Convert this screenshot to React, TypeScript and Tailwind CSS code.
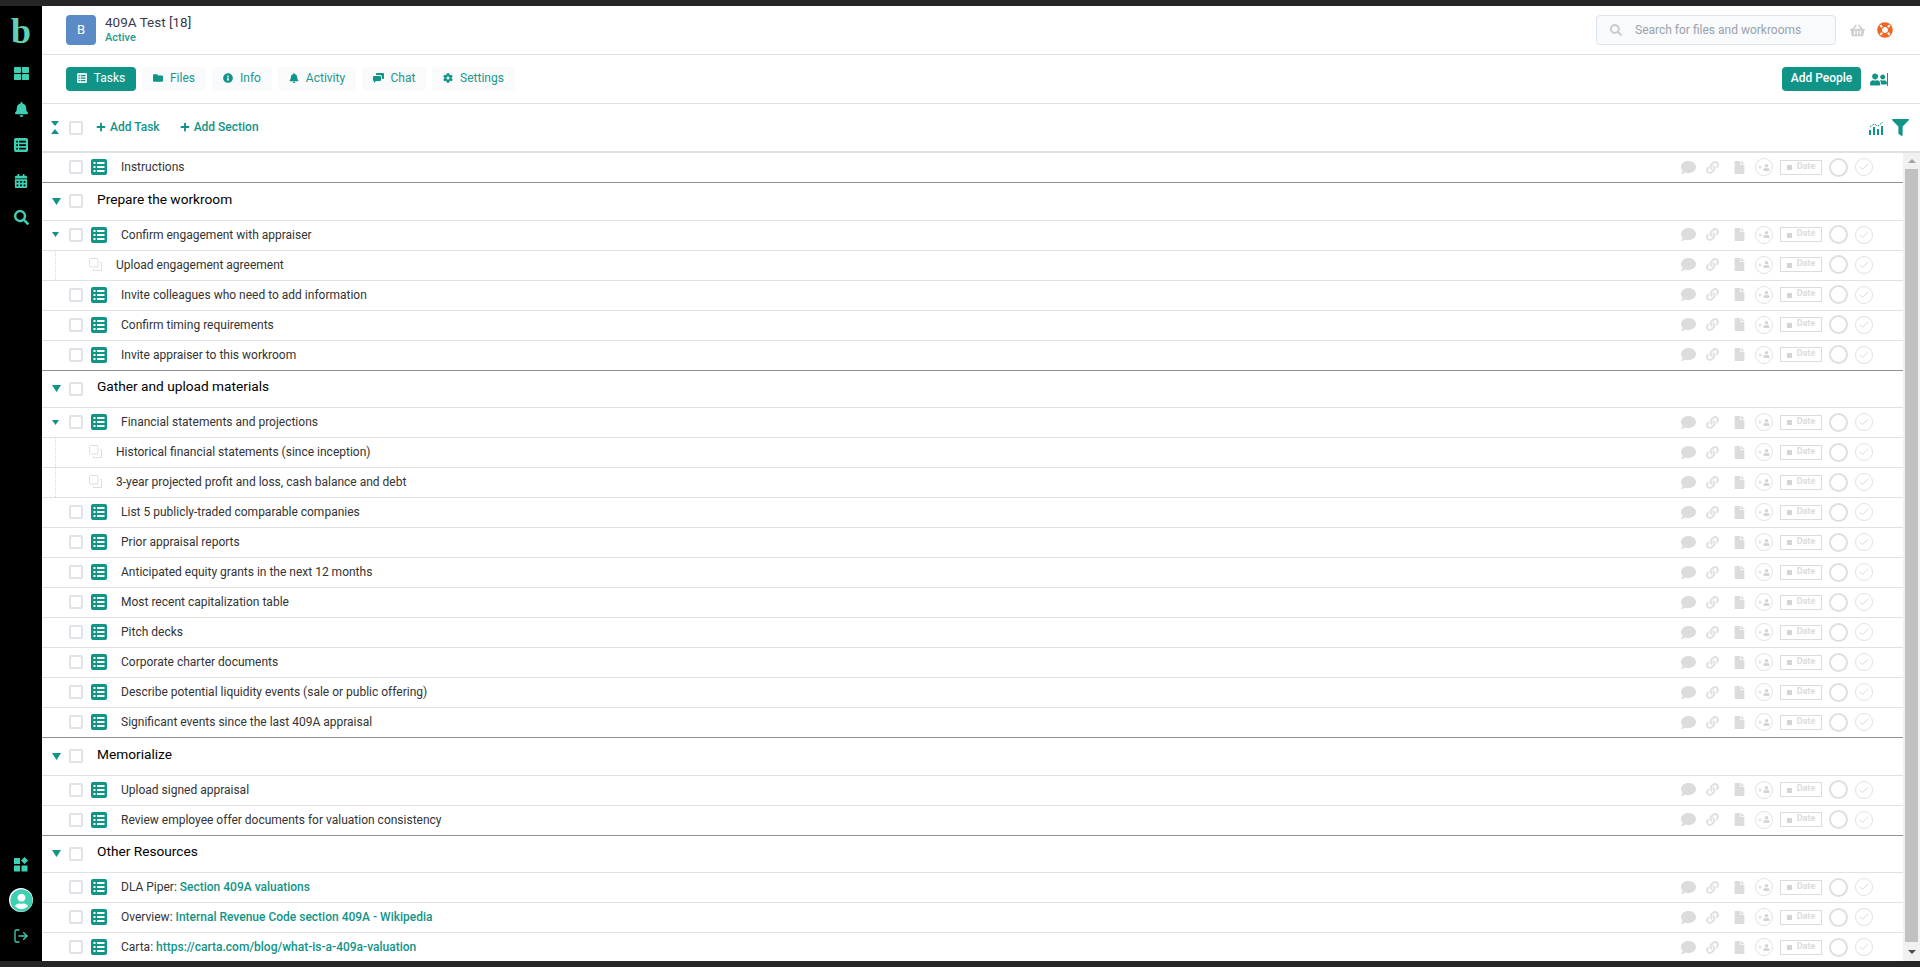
import type { ReactNode } from "react";
import { Check, LogOut } from "lucide-react";
import {
  FaBell,
  FaCalendarAlt,
  FaCog,
  FaComment,
  FaFile,
  FaFilter,
  FaFolder,
  FaInfoCircle,
  FaLifeRing,
  FaLink,
  FaPlus,
  FaSearch,
  FaShoppingBasket,
  FaThLarge,
  FaUser,
  FaUserCircle,
  FaUserFriends,
} from "react-icons/fa";

type Task = {
  label: string;
  link?: string;
  open?: boolean;
  sub?: boolean;
};

const sections: { title: string; tasks: Task[] }[] = [
  {
    title: "Prepare the workroom",
    tasks: [
      { label: "Confirm engagement with appraiser", open: true },
      { label: "Upload engagement agreement", sub: true },
      { label: "Invite colleagues who need to add information" },
      { label: "Confirm timing requirements" },
      { label: "Invite appraiser to this workroom" },
    ],
  },
  {
    title: "Gather and upload materials",
    tasks: [
      { label: "Financial statements and projections", open: true },
      { label: "Historical financial statements (since inception)", sub: true },
      { label: "3-year projected profit and loss, cash balance and debt", sub: true },
      { label: "List 5 publicly-traded comparable companies" },
      { label: "Prior appraisal reports" },
      { label: "Anticipated equity grants in the next 12 months" },
      { label: "Most recent capitalization table" },
      { label: "Pitch decks" },
      { label: "Corporate charter documents" },
      { label: "Describe potential liquidity events (sale or public offering)" },
      { label: "Significant events since the last 409A appraisal" },
    ],
  },
  {
    title: "Memorialize",
    tasks: [
      { label: "Upload signed appraisal" },
      { label: "Review employee offer documents for valuation consistency" },
    ],
  },
  {
    title: "Other Resources",
    tasks: [
      { label: "DLA Piper: ", link: "Section 409A valuations" },
      { label: "Overview: ", link: "Internal Revenue Code section 409A - Wikipedia" },
      { label: "Carta: ", link: "https://carta.com/blog/what-is-a-409a-valuation" },
    ],
  },
];

function ListIcon({ size = 16 }: { size?: number }) {
  return (
    <svg width={size} height={size} viewBox="0 0 16 16" fill="currentColor">
      <path
        fillRule="evenodd"
        d="M2 0h12a2 2 0 0 1 2 2v12a2 2 0 0 1-2 2H2a2 2 0 0 1-2-2V2a2 2 0 0 1 2-2zM2.500 3v2h2V3zM6 3v2h7.500V3zM2.500 7v2h2V7zM6 7v2h7.500V7zM2.500 11v2h2v-2zM6 11v2h7.500v-2z"
      />
    </svg>
  );
}

function ChatIcon() {
  return (
    <svg width={11} height={10} viewBox="0 0 11 10" fill="currentColor">
      <path d="M4 0h6a1 1 0 0 1 1 1v4a1 1 0 0 1-1 1H9V4a2 2 0 0 0-2-2H3V1a1 1 0 0 1 1-1z" />
      <path d="M1 3h6a1 1 0 0 1 1 1v3a1 1 0 0 1-1 1H3L1 10V8a1 1 0 0 1-1-1V4a1 1 0 0 1 1-1z" />
    </svg>
  );
}

function CollapseIcon() {
  return (
    <svg width={8} height={13} viewBox="0 0 8 13" fill="#119488">
      <path d="M0 0h8L4 5zM4 8l4 5H0z" />
    </svg>
  );
}

function ChartIcon() {
  return (
    <svg width={15} height={14} viewBox="0 0 15 14" fill="#119488">
      <path d="M0 9h2v5H0zM4 6h2v8H4zM8 8h2v6H8zM12 5h2v9h-2z" />
      <path d="M1 6l4-3 4 2 5-4" fill="none" stroke="#119488" strokeWidth="1" strokeDasharray="2 1" />
    </svg>
  );
}

function Caret({ width, height }: { width: number; height: number }) {
  return (
    <svg width={width} height={height} viewBox="0 0 8 6" preserveAspectRatio="none" fill="#119488">
      <path d="M0 0h8L4 6z" />
    </svg>
  );
}

function SubtaskIcon() {
  return (
    <svg width={13} height={13} viewBox="0 0 13 13" fill="none" stroke="#dedede" strokeWidth="1">
      <rect x="0.5" y="0.5" width="8.500" height="8.500" rx="1" />
      <path d="M11 4.500h1.500v8H4.500V11" />
    </svg>
  );
}

function Checkbox() {
  return <span className="block h-[14px] w-[14px] shrink-0 rounded-[2px] border-2 border-[#dfe3e8] bg-white" />;
}

function Tab({ label, icon, width, active }: { label: string; icon: ReactNode; width: string; active?: boolean }) {
  return (
    <button
      className={`flex h-6 items-center justify-center gap-[7px] rounded pb-[2px] text-xs ${width} ${
        active ? "bg-[#119488] text-white" : "bg-[#f8fafb] text-[#23988d]"
      }`}
    >
      <span className={active ? "text-[#e6f4f2]" : "text-[#119488]"}>{icon}</span>
      {label}
    </button>
  );
}

function RowActions() {
  return (
    <div className="ml-auto flex items-center pr-[30px] text-[#dcdcdc]">
      <FaComment size={15} />
      <FaLink size={13} className="ml-[10px] text-[#e0e0e0]" />
      <FaFile size={13} className="ml-[14px]" />
      <span className="ml-[9px] flex h-[18px] w-[18px] items-center justify-center gap-px rounded-full border border-[#e2e2e2] text-[#d4d4d4]">
        <FaPlus size={4} />
        <FaUser size={7} />
      </span>
      <span className="ml-[7px] flex h-[15px] w-[42px] items-center justify-center gap-[5px] border border-[#dcdcdc] text-[9px] leading-none font-bold text-[#dcdcdc]">
        <span className="mt-px h-[5px] w-[5px] bg-[#d4d4d4]" />
        <span className="pb-[2px]">Date</span>
      </span>
      <span className="ml-[7px] h-[19px] w-[19px] rounded-full border-2 border-[#dedfe2]" />
      <span className="ml-[7px] flex h-[18px] w-[18px] items-center justify-center rounded-full border border-[#e2e2e2] text-[#cfcfcf]">
        <Check size={12} strokeWidth={1.5} />
      </span>
    </div>
  );
}

function TaskRow({ task, first }: { task: Task; first?: boolean }) {
  return (
    <div className={`flex items-center pb-px ${first ? "h-[29px]" : "h-[30px] border-t border-[#dde2e8]"}`}>
      {task.sub ? (
        <>
          <span className="-mb-px ml-[13px] self-stretch border-l border-dotted border-[#d5d8dc]" />
          <span className="ml-[33px] pb-px">
            <SubtaskIcon />
          </span>
          <span className="ml-[14px] text-xs text-[#333]">{task.label}</span>
        </>
      ) : (
        <>
          <span className="flex w-[27px] pl-[10px]">{task.open && <Caret width={7} height={5} />}</span>
          <Checkbox />
          <span className="ml-[8px] text-[#119488]">
            <ListIcon />
          </span>
          <span className="ml-[14px] text-xs text-[#333]">
            {task.label}
            {task.link && <span className="font-medium text-[#119488]">{task.link}</span>}
          </span>
        </>
      )}
      <RowActions />
    </div>
  );
}

function SectionRow({ title }: { title: string }) {
  return (
    <div className="flex h-[37.5px] items-center border-t border-[#8e9196]">
      <span className="flex w-[27px] pl-[10px]">
        <Caret width={9} height={7} />
      </span>
      <Checkbox />
      <span className="ml-[14px] pb-1 text-[13.7px] text-[#000]">{title}</span>
    </div>
  );
}

function SideItem({ children }: { children: ReactNode }) {
  return <div className="flex h-9 items-center justify-center">{children}</div>;
}

export default function App() {
  return (
    <div className="flex h-screen flex-col overflow-hidden bg-[#262626] font-['Roboto',sans-serif]">
      <div className="h-[6px] shrink-0" />
      <div className="flex min-h-0 flex-1">
        <aside className="flex w-[42px] shrink-0 flex-col justify-between bg-black pb-[7px] text-[#3fd0b4]">
          <div>
            <div className="flex h-[49px] items-center justify-center font-['Liberation_Serif',serif] text-[36px] leading-none font-bold text-[#5fcfb5]">
              b
            </div>
            <SideItem>
              <FaThLarge size={15} />
            </SideItem>
            <SideItem>
              <FaBell size={15} />
            </SideItem>
            <SideItem>
              <ListIcon size={14} />
            </SideItem>
            <SideItem>
              <FaCalendarAlt size={14} />
            </SideItem>
            <SideItem>
              <FaSearch size={15} />
            </SideItem>
          </div>
          <div>
            <SideItem>
              <svg width={15} height={15} viewBox="0 0 15 15" fill="currentColor">
                <path d="M0 1h6v6H0zM0 8.500h6v6H0zM7.500 8.500h6v6h-6zM10.500 0l3.500 3.500-3.500 3.500L7 3.500z" />
              </svg>
            </SideItem>
            <SideItem>
              <span className="flex h-6 w-6 items-center justify-center rounded-full bg-white">
                <FaUserCircle size={23} />
              </span>
            </SideItem>
            <SideItem>
              <LogOut size={16} />
            </SideItem>
          </div>
        </aside>

        <main className="flex min-w-0 flex-1 flex-col bg-white">
          <header className="flex h-[49px] shrink-0 items-center border-b border-[#dde2e8] pr-[27px] pl-[24px]">
            <div className="flex h-[30px] w-[30px] items-center justify-center rounded bg-[#5b8bc7] text-[13px] text-white">B</div>
            <div className="mb-[3px] ml-[9px]">
              <div className="text-[13.5px] leading-[17px] text-[#3a3a4a]">409A Test [18]</div>
              <div className="text-[11px] leading-[13px] font-medium text-[#23988d]">Active</div>
            </div>
            <div className="ml-auto flex h-[30px] w-[240px] items-center rounded border border-[#dde3ea] bg-[#f8fafc] pl-[13px] text-xs text-[#9aa2ad]">
              <FaSearch size={12} className="text-[#c8ccd0]" />
              <span className="ml-[13px]">Search for files and workrooms</span>
            </div>
            <FaShoppingBasket size={15} className="ml-[14px] text-[#d0d0d0]" />
            <FaLifeRing size={16} className="ml-[12px] text-[#f26522]" />
          </header>

          <nav className="flex h-[49px] shrink-0 items-center gap-[6px] border-b border-[#dde2e8] pr-[32px] pl-[24px]">
            <Tab label="Tasks" icon={<ListIcon size={10} />} width="w-[70px]" active />
            <Tab label="Files" icon={<FaFolder size={10} />} width="w-[64px]" />
            <Tab label="Info" icon={<FaInfoCircle size={10} />} width="w-[60px]" />
            <Tab label="Activity" icon={<FaBell size={10} />} width="w-[78px]" />
            <Tab label="Chat" icon={<ChatIcon />} width="w-[64px]" />
            <Tab label="Settings" icon={<FaCog size={10} />} width="w-[83px]" />
            <button className="ml-auto h-6 w-[79px] rounded bg-[#119488] pb-[2px] text-xs font-medium text-white">Add People</button>
            <span className="ml-[3px] flex items-center text-[#119488]">
              <FaUserFriends size={17} />
              <span className="h-[13px] w-px bg-[#119488]" />
            </span>
          </nav>

          <div className="flex h-[49px] shrink-0 items-center border-b-2 border-[#dde2e8] pr-[11px]">
            <span className="flex w-[27px] pl-[9px]">
              <CollapseIcon />
            </span>
            <Checkbox />
            <button className="ml-[13px] flex items-center gap-[4px] pb-px text-xs font-medium text-[#119488]">
              <FaPlus size={10} />
              Add Task
            </button>
            <button className="ml-[20px] flex items-center gap-[4px] pb-px text-xs font-medium text-[#119488]">
              <FaPlus size={10} />
              Add Section
            </button>
            <span className="ml-auto">
              <ChartIcon />
            </span>
            <FaFilter size={17} className="ml-[8px] text-[#119488]" />
          </div>

          <div className="flex min-h-0 flex-1">
            <div className="min-w-0 flex-1 overflow-hidden">
              <TaskRow task={{ label: "Instructions" }} first />
              {sections.map((section) => (
                <div key={section.title}>
                  <SectionRow title={section.title} />
                  {section.tasks.map((task) => (
                    <TaskRow key={task.label} task={task} />
                  ))}
                </div>
              ))}
            </div>
            <div className="flex w-[17px] shrink-0 flex-col items-center bg-[#f1f1f1]">
              <div className="flex h-4 items-center">
                <span className="border-x-4 border-b-4 border-x-transparent border-b-[#a3a3a3]" />
              </div>
              <div className="w-[13px] flex-1 bg-[#c1c1c1]" />
              <div className="flex h-[19px] items-center">
                <span className="border-x-4 border-t-4 border-x-transparent border-t-[#505050]" />
              </div>
            </div>
          </div>
        </main>
      </div>
      <div className="h-[6px] shrink-0" />
    </div>
  );
}
